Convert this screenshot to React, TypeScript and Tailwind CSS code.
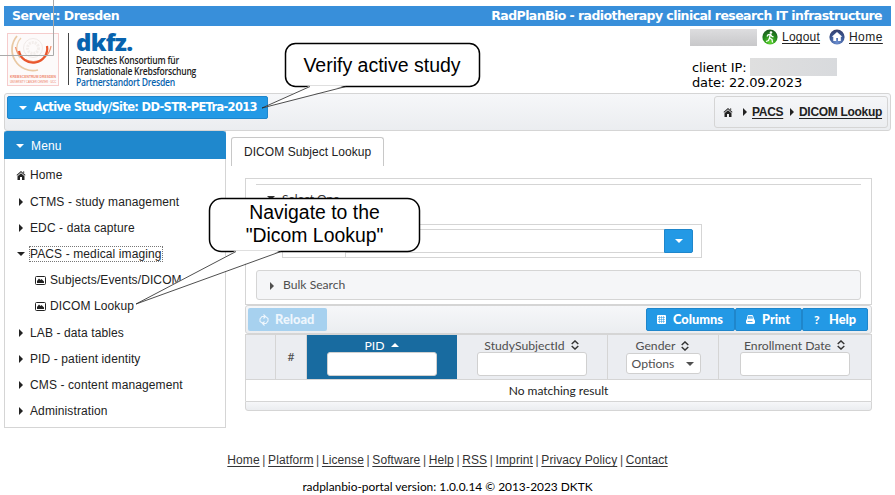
import React from "react";

const ARIAL = "font-['Liberation_Sans',Arial,sans-serif]";
const LATO = "font-[Lato,sans-serif]";
const VERDANA = "font-['DejaVu_Sans',Verdana,sans-serif]";

function Down({ className = "" }: { className?: string }) {
  return (
    <svg width="8" height="4" viewBox="0 0 8 4" className={`shrink-0 ${className}`}>
      <path d="M0 0h8L4 4z" fill="currentColor" />
    </svg>
  );
}

function Right({ className = "" }: { className?: string }) {
  return (
    <svg width="4" height="8" viewBox="0 0 4 8" className={`shrink-0 ${className}`}>
      <path d="M0 0v8l4-4z" fill="currentColor" />
    </svg>
  );
}

function House({ className = "" }: { className?: string }) {
  return (
    <svg width="10" height="9" viewBox="0 0 10 9" className={`shrink-0 ${className}`}>
      <path d="M5 0 .5 4l.6.7L5 1.200l3.900 3.500.6-.7zM5 2.200 1.500 5.200V9H4V6h2v3h2.500V5.200z" fill="currentColor" />
      <path d="M7 .4h1.200v1.800L7 1.200z" fill="currentColor" />
    </svg>
  );
}

function Picture() {
  return (
    <svg width="11" height="9" viewBox="0 0 11 9" className="shrink-0">
      <rect x=".5" y=".5" width="10" height="8" rx="1" fill="none" stroke="#222" />
      <path d="M2 7V5l2-2.500 1.500 1.500 1-1L9 5.500V7z" fill="#222" />
    </svg>
  );
}

function Sort() {
  return (
    <svg width="8" height="10" viewBox="0 0 8 10" className="shrink-0" fill="none" stroke="#333" strokeWidth="1.400">
      <path d="M.7 4 4 .9 7.300 4M.7 6 4 9.100 7.300 6" />
    </svg>
  );
}

function Reload() {
  return (
    <svg width="10" height="12" viewBox="0 0 10 12" className="shrink-0" fill="none" stroke="currentColor" strokeWidth="1.100">
      <path d="M4 9.500 1 7.500V5l2-2.500h3M4.500 .5l2 2-2 2M4 9.500h3L9 7V4.500L7 2.800M5.500 7.500l-2 2 2 2" />
    </svg>
  );
}

function GridIcon() {
  return (
    <svg width="9" height="9" viewBox="0 0 9 9" className="shrink-0">
      <rect width="9" height="9" rx="1" fill="#fff" />
      <path d="M1 2.500h7M1 4.500h7M1 6.500h7M2.500 1v7M4.500 1v7M6.500 1v7" stroke="#2399e5" strokeWidth=".5" />
    </svg>
  );
}

function PrintIcon() {
  return (
    <svg width="9" height="9" viewBox="0 0 9 9" className="shrink-0">
      <path d="M2 .5h4.500L7.500 4H1.500z" fill="none" stroke="#fff" />
      <path d="M1 4h7l1 1.500V8L8 9H1L0 8V5.500z" fill="#fff" />
      <path d="M3 2h3" stroke="#fff" strokeWidth=".7" />
      <path d="M1.500 6.500h5" stroke="#2399e5" strokeWidth=".8" />
    </svg>
  );
}

function CenterLogo() {
  return (
    <svg width="52" height="53" viewBox="0 0 52 53" className="shrink-0">
      <rect x=".5" y=".5" width="51" height="52" fill="#fdfafa" stroke="#f6cccc" />
      <g fill="none">
        <circle cx="26" cy="15" r="9.500" stroke="#f0eae8" strokeWidth="1" />
        <circle cx="26" cy="15" r="5.500" stroke="#f3eeec" strokeWidth="3" strokeDasharray="2 1" />
        <path d="M10 3A21 21 0 0 0 31 37" stroke="#e9c9a4" strokeWidth="1.800" />
        <path d="M14 5A15.500 15.500 0 0 0 13 25" stroke="#ecd0b0" strokeWidth="1.300" />
        <path d="M8.500 14A18 18 0 0 0 44 13" stroke="#f19470" strokeWidth="1.300" />
        <path d="M12 18A14.200 14.200 0 0 0 40 13" stroke="#e9562d" strokeWidth="2.200" />
      </g>
      <text x="3" y="45" fontSize="4.400" fontWeight="bold" fontFamily="Liberation Sans, sans-serif" fill="#ef8a72" textLength="46" lengthAdjust="spacingAndGlyphs">KREBSCENTRUM DRESDEN</text>
      <text x="3" y="50" fontSize="3.700" fontFamily="Liberation Sans, sans-serif" fill="#ec7358" textLength="46" lengthAdjust="spacingAndGlyphs">UNIVERSITY CANCER CENTER · UCC</text>
    </svg>
  );
}

function LogoutIcon() {
  return (
    <svg width="16" height="16" viewBox="0 0 16 16" className="shrink-0">
      <defs>
        <radialGradient id="green" cx=".5" cy=".85" r=".8">
          <stop offset="0" stopColor="#5ed52f" />
          <stop offset=".6" stopColor="#238a1c" />
          <stop offset="1" stopColor="#1c5a20" />
        </radialGradient>
      </defs>
      <circle cx="8" cy="8" r="7.600" fill="url(#green)" />
      <circle cx="9" cy="3.500" r="1.300" fill="#fff" />
      <path d="M8.500 5 7.500 9l2.500 1.500.5 3M7.500 9 6.500 11.500 4 12.500M5 7.500 6 5.800l2.500-.5L10 7.500l1.500.3" fill="none" stroke="#fff" strokeWidth="1.300" />
    </svg>
  );
}

function HomeIcon() {
  return (
    <svg width="16" height="16" viewBox="0 0 16 16" className="shrink-0">
      <defs>
        <radialGradient id="navy" cx=".5" cy=".85" r=".85">
          <stop offset="0" stopColor="#6d8fd0" />
          <stop offset=".6" stopColor="#3a5794" />
          <stop offset="1" stopColor="#343b66" />
        </radialGradient>
      </defs>
      <circle cx="8" cy="8" r="7.600" fill="url(#navy)" />
      <path d="M8 3 2.800 7.800h1.500V12h2.900V9h1.800v3h2.800V7.800h1.500z" fill="#fff" />
    </svg>
  );
}

function MenuItem({ label, kind = "right" }: { label: string; kind?: "right" | "open" | "home" | "leaf" }) {
  return (
    <li className={`flex h-[26.200px] items-center ${kind === "leaf" ? "pl-[30px]" : "pl-[10px]"}`}>
      <span className="flex w-[11px] justify-center">
        {kind === "home" && <House />}
        {kind === "leaf" && <Picture />}
        {kind === "right" && <Right className="ml-px" />}
        {kind === "open" && <Down />}
      </span>
      <span className={kind === "open" ? "ml-[3px] border border-dotted border-[#777] leading-[14px]" : "ml-[4px]"}>
        {label}
      </span>
    </li>
  );
}

const blueButton = "flex h-[23px] items-center whitespace-nowrap rounded-[2px] border border-[#1f86cb] bg-[#2399e5] font-black text-white";
const columnTitle = "mr-px flex h-[14px] items-center gap-[6px] whitespace-nowrap leading-[14px]";
const filterInput = "h-[24px] w-[110px] rounded-[3px] border border-[#d0d0d0] bg-white";

const links = ["Home", "Platform", "License", "Software", "Help", "RSS", "Imprint", "Privacy Policy", "Contact"];

export default function App() {
  return (
    <div className={`relative h-[495px] w-[895px] overflow-hidden bg-white pt-[6px] text-[12px] text-[#222] ${ARIAL}`}>
      <div className={`ml-1 flex h-5 w-[887px] items-center justify-between bg-[#388fda] pr-[9px] pl-2 pt-px text-[12.500px] font-bold whitespace-nowrap text-white ${VERDANA}`}>
        <span className="tracking-[-0.500px]">Server: Dresden</span>
        <span className="tracking-[-0.570px]">RadPlanBio - radiotherapy clinical research IT infrastructure</span>
      </div>

      <header className="flex h-[67px] pl-[7px]">
        <div className="mt-[7px]"><CenterLogo /></div>
        <div className="mt-[7px] ml-[9px] h-[52px] w-px bg-[#444]" />
        <div className="mt-[5px] ml-[7px] w-[180px] font-['Open_Sans',sans-serif] text-[10px] font-semibold whitespace-nowrap">
          <div className="h-[24px] origin-left scale-x-[1.040] text-[23px] leading-[22px] font-extrabold tracking-[-0.700px] text-[#0763ae]">dkfz.</div>
          <div className="origin-left scale-x-[.855] leading-[11px] tracking-[-0.250px]">Deutsches Konsortium für</div>
          <div className="origin-left scale-x-[.855] leading-[11px] tracking-[-0.250px]">Translationale Krebsforschung</div>
          <div className="origin-left scale-x-[.855] leading-[11px] tracking-[-0.250px] text-[#0763ae]">Partnerstandort Dresden</div>
        </div>
        <div className="ml-auto w-[205px]">
          <div className="mt-[3px] flex h-[16px] items-center">
            <span className="h-[17px] w-[67px] bg-linear-to-b from-[#dddddf] to-[#c8c8ca]" />
            <span className="ml-[5px]"><LogoutIcon /></span>
            <a className="ml-[4px] w-[38px] tracking-[0.220px] underline underline-offset-2">Logout</a>
            <span className="ml-[9px]"><HomeIcon /></span>
            <a className="ml-[4px] tracking-[0.450px] underline underline-offset-2">Home</a>
          </div>
          <div className={`mt-[14px] ml-[2px] text-[13px] leading-[15px] text-black ${VERDANA}`}>
            <div className="flex h-[15px] items-center"><span className="w-[58px] pt-[2px] tracking-[-0.150px]">client IP:</span><span className="h-[18px] w-[87px] bg-linear-to-r from-[#dfdfdf] to-[#d8dadd]" /></div>
            <div className="pt-px tracking-[-0.140px]">date: 22.09.2023</div>
          </div>
        </div>
      </header>

      <div className="ml-1 flex h-[38px] w-[887px] justify-between rounded-[3px] border border-[#d5d5d5] bg-linear-to-b from-[#f6f7f9] to-[#ebedf0] p-[2px]">
        <div className={`${blueButton} ${VERDANA} w-[261px] pl-[11px] text-[11.500px]`}>
          <Down />
          <span className="ml-[7px] font-bold tracking-[-0.680px]">Active Study/Site: DD-STR-PETra-2013</span>
        </div>
        <nav className="flex h-[32px] w-[174px] items-center rounded-[3px] border border-[#d5d5d5] pl-[8px] text-[12px] font-bold whitespace-nowrap">
          <House />
          <Right className="ml-[10px]" />
          <a className="ml-[5px] w-[31px] tracking-[-0.300px] underline underline-offset-2">PACS</a>
          <Right className="ml-[7px]" />
          <a className="ml-[5px] tracking-[-0.300px] underline underline-offset-2">DICOM Lookup</a>
        </nav>
      </div>

      <main className="flex h-[297px] pl-1">
        <aside className="h-[297px] w-[222px] border border-t-0 border-[#d5d5d5]">
          <h2 className="-mx-px flex h-[28px] items-center rounded-t-[3px] bg-[#1f88cd] pt-px pl-[12px] text-white">
            <Down />
            <span className="ml-[7px] tracking-[0.150px]">Menu</span>
          </h2>
          <ul className="pt-[3.300px] tracking-[0.110px]">
            <MenuItem label="Home" kind="home" />
            <MenuItem label="CTMS - study management" />
            <MenuItem label="EDC - data capture" />
            <MenuItem label="PACS - medical imaging" kind="open" />
            <MenuItem label="Subjects/Events/DICOM" kind="leaf" />
            <MenuItem label="DICOM Lookup" kind="leaf" />
            <MenuItem label="LAB - data tables" />
            <MenuItem label="PID - patient identity" />
            <MenuItem label="CMS - content management" />
            <MenuItem label="Administration" />
          </ul>
        </aside>

        <section className="ml-[5px] w-[641px] pt-[6px]">
          <div className="flex h-[29px] w-[153px] items-center rounded-t-[3px] border border-b-0 border-[#c8c8c8] pl-[12px] tracking-[0.060px]">DICOM Subject Lookup</div>
          <div className={`mt-[12px] ml-[14px] w-[627px] text-[#4f4f4f] ${LATO}`}>
            <div className="h-[127px] border border-[#d5d5d5] px-[10px] pt-[5px]">
              <div className="h-[40px] border-t border-[#d5d5d5] pt-[7px]">
                <div className="flex items-center pl-[11px] leading-[14px] text-[#333]"><Down className="mb-[2px]" /><span className="ml-[7px] text-[12px]">Select One</span></div>
              </div>
              <div className="ml-[26px] flex h-[34px] w-[420px] border border-[#d5d5d5]">
                <div className="w-[63px] border-r border-[#d5d5d5]" />
                <div className="mt-[4px] flex h-[24px] w-[347px]">
                  <div className="flex-1 border-y border-[#d5d5d5]" />
                  <div className="flex w-[29px] items-center justify-center rounded-r-[2px] border border-[#1f86cb] bg-[#2399e5] text-white"><Down /></div>
                </div>
              </div>
              <div className="mt-[12px] flex h-[30px] items-center rounded-[3px] border border-[#d5d5d5] bg-[#f5f6f8] pt-px pl-[13px] text-[12.150px]">
                <Right /><span className="ml-[9px]">Bulk Search</span>
              </div>
            </div>

            <div className="flex h-[29px] items-center rounded-[3px] border border-[#d5d5d5] bg-linear-to-b from-[#f6f7f9] to-[#ebedf0] pr-[3px] pl-[2px] text-[12.800px]">
              <div className="flex h-[23px] w-[79px] items-center rounded-[2px] bg-[#a7d1ef] pl-[11px] font-black text-[#eef6fd]">
                <Reload /><span className="ml-[6px]">Reload</span>
              </div>
              <div className={`${blueButton} ml-auto w-[89px] pl-[10px]`}><GridIcon /><span className="ml-[7px]">Columns</span></div>
              <div className={`${blueButton} w-[67px] pl-[10px]`}><PrintIcon /><span className="ml-[7px]">Print</span></div>
              <div className={`${blueButton} w-[66px] pl-[11px]`}><span className="w-[7px] text-[12px]">?</span><span className="ml-[8px]">Help</span></div>
            </div>

            <div className="grid h-[46px] grid-cols-[30px_31px_150px_151px_111px_152px] border border-[#d5d5d5] bg-[#ebedf1] text-[12.200px]">
              <div className="border-r border-[#d5d5d5]" />
              <div className="flex items-center justify-center border-r border-[#d5d5d5]">#</div>
              <div className="flex flex-col items-center bg-[#186ba0] pt-[3px] text-white">
                <div className={columnTitle}><span className="pt-px">PID</span><Down className="rotate-180" /></div>
                <div className={filterInput} />
              </div>
              <div className="flex flex-col items-center border-r border-[#d5d5d5] pt-[3px]">
                <div className={columnTitle}><span className="pt-px">StudySubjectId</span><Sort /></div>
                <div className={filterInput} />
              </div>
              <div className="flex flex-col items-center border-r border-[#d5d5d5] pt-[4px]">
                <div className={columnTitle}><span>Gender</span><Sort /></div>
                <div className="flex h-[21px] w-[75px] items-center justify-between rounded-[3px] border border-[#d0d0d0] bg-white pt-px pr-[6px] pl-[5px]">Options<Down /></div>
              </div>
              <div className="flex flex-col items-center pt-[3px]">
                <div className={columnTitle}><span className="pt-px">Enrollment Date</span><Sort /></div>
                <div className={filterInput} />
              </div>
            </div>
            <div className="flex h-[21px] items-center justify-center border-x border-[#d5d5d5] pt-px text-[12px] text-[#222]">No matching result</div>
            <div className="h-[10px] rounded-b-[3px] border border-[#d5d5d5] bg-linear-to-b from-[#f6f7f9] to-[#ebedf0]" />
          </div>
        </section>
      </main>

      <footer className="text-center text-black">
        <div className="mt-[25px] flex h-[14px] justify-center gap-[2.600px] leading-[14px] tracking-[0.090px]">
          {links.map((link, index) => (
            <React.Fragment key={link}>
              {index > 0 && <span className="text-[#444]">|</span>}
              <a className="text-[#333] underline underline-offset-2">{link}</a>
            </React.Fragment>
          ))}
        </div>
        <div className={`mt-[13px] text-[11.900px] leading-[14px] ${LATO}`}>radplanbio-portal version: 1.0.0.14 © 2013-2023 DKTK</div>
      </footer>

      <svg className="pointer-events-none absolute inset-0" width="895" height="495" viewBox="0 0 895 495">
        <path d="M53.500 0V55.500H0" fill="none" stroke="#aaa" />
        <rect x="285.500" y="43.500" width="194" height="43" rx="10" fill="#fff" stroke="#000" strokeWidth="1.500" />
        <path d="M310 85.500 262 108 346 85.500z" fill="#fff" />
        <path d="M310 86.500 262 108 346 86.500" fill="none" stroke="#222" strokeWidth=".8" />
        <rect x="209.500" y="198.500" width="210" height="53" rx="12" fill="#fff" stroke="#000" strokeWidth="1.500" />
        <path d="M236 250.500 136 304 281 250.500z" fill="#fff" />
        <path d="M236 251.500 136 304 281 251.500" fill="none" stroke="#222" strokeWidth=".8" />
      </svg>
      <div className="absolute top-[54px] left-[286px] w-[192px] text-center text-[19.500px] leading-[23px] whitespace-nowrap text-black">Verify active study</div>
      <div className="absolute top-[201px] left-[210px] w-[209px] text-center text-[19.400px] leading-[23px] whitespace-nowrap text-black">Navigate to the<br />"Dicom Lookup"</div>
    </div>
  );
}
